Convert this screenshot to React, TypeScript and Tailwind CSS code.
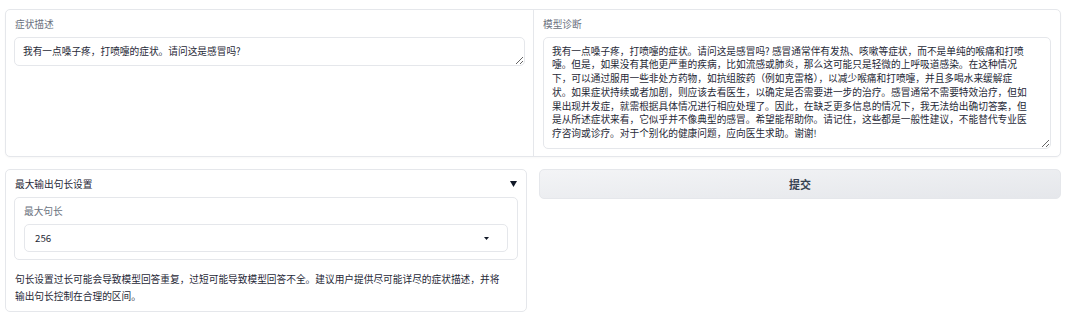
import React from "react";

const lines = [
  "我有一点嗓子疼，打喷嚏的症状。请问这是感冒吗? 感冒通常伴有发热、咳嗽等症状，而不是单纯的喉痛和打喷",
  "嚏。但是，如果没有其他更严重的疾病，比如流感或肺炎，那么这可能只是轻微的上呼吸道感染。在这种情况",
  "下，可以通过服用一些非处方药物，如抗组胺药（例如克雷格），以减少喉痛和打喷嚏，并且多喝水来缓解症",
  "状。如果症状持续或者加剧，则应该去看医生，以确定是否需要进一步的治疗。感冒通常不需要特效治疗，但如",
  "果出现并发症，就需根据具体情况进行相应处理了。因此，在缺乏更多信息的情况下，我无法给出确切答案，但",
  "是从所述症状来看，它似乎并不像典型的感冒。希望能帮助你。请记住，这些都是一般性建议，不能替代专业医",
  "疗咨询或诊疗。对于个别化的健康问题，应向医生求助。谢谢!",
];

export default function App() {
  return (
    <div
      className="w-[1080px] h-[335px] bg-white pt-[9px] pl-[5px] text-[9.7px] text-[#1f2937]"
      style={{ fontFamily: '"Noto Sans CJK SC", "Noto Sans", sans-serif' }}
    >
      <div className="w-[1056px] flex flex-col gap-[12px]">
        {/* Top card */}
        <div className="flex border border-[#e5e7eb] rounded-[5px] bg-white shadow-[0_1px_2px_rgba(0,0,0,0.03)]">
          <div className="w-[528px] px-[8px] pt-[7px] pb-[7px]">
            <div className="leading-[14px] text-[#6b7280] mb-[6px] pl-[1px]">症状描述</div>
            <textarea
              readOnly
              className="block w-full h-[29px] resize-y border border-[#e5e7eb] rounded-[5px] px-[8px] py-[6.5px] leading-[13.8px] text-[9.7px] text-[#1f2937] outline-none bg-white overflow-hidden"
              style={{ fontFamily: '"Noto Sans CJK SC", "Noto Sans", sans-serif' }}
              value="我有一点嗓子疼，打喷嚏的症状。请问这是感冒吗?"
            />
          </div>
          <div className="w-[528px] border-l border-[#e5e7eb] px-[9px] pt-[7px] pb-[7px]">
            <div className="leading-[14px] text-[#6b7280] mb-[6px]">模型诊断</div>
            <div className="h-[112px] resize-y overflow-hidden border border-[#e5e7eb] rounded-[5px] px-[8px] py-[6.5px] leading-[13.8px] text-[#1f2937]">
              {lines.map((l, i) => (
                <div key={i} className="whitespace-nowrap">
                  {l}
                </div>
              ))}
            </div>
          </div>
        </div>

        {/* Bottom row */}
        <div className="flex items-start gap-[12px]">
          <div className="w-[522px] border border-[#e5e7eb] rounded-[5px] px-[8px] pt-[7px] pb-[6px]">
            <div className="flex items-center justify-between leading-[14px] pl-[1px] mb-[6px]">
              <span className="text-[#1f2937]">最大输出句长设置</span>
              <svg width="7" height="6" viewBox="0 0 7 6" className="mr-[1px]">
                <polygon points="0,0 7,0 3.5,6" fill="#111827" />
              </svg>
            </div>
            <div className="border border-[#e5e7eb] rounded-[5px] px-[9px] pt-[6px] pb-[7px]">
              <div className="leading-[14px] text-[#6b7280] mb-[6px]">最大句长</div>
              <div className="h-[28px] border border-[#e5e7eb] rounded-[5px] flex items-center justify-between pl-[10px] pr-[18px]">
                <span className="text-[#1f2937]">256</span>
                <svg width="5" height="3" viewBox="0 0 5 3">
                  <polygon points="0,0 5,0 2.5,3" fill="#111827" />
                </svg>
              </div>
            </div>
            <div className="mt-[11px] pl-[1px] leading-[17px] text-[#1f2937]">
              句长设置过长可能会导致模型回答重复，过短可能导致模型回答不全。建议用户提供尽可能详尽的症状描述，并将
              <br />
              输出句长控制在合理的区间。
            </div>
          </div>
          <button className="w-[522px] h-[30px] rounded-[5px] border border-[#e5e7eb] bg-gradient-to-br from-[#f3f4f6] to-[#e5e7eb] text-[11px] font-bold text-[#374151] flex items-center justify-center">
            提交
          </button>
        </div>
      </div>
    </div>
  );
}
